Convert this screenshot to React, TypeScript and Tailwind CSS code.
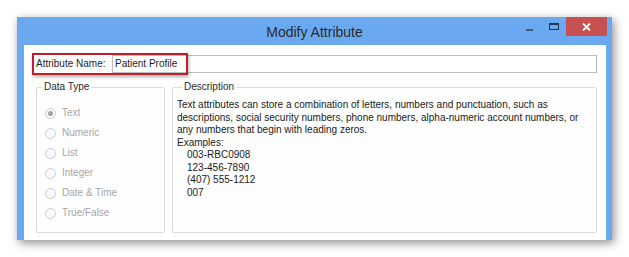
import React from "react";

const font = { fontFamily: '"Liberation Sans", Arial, sans-serif' };

function Radio({ label, checked }: { label: string; checked?: boolean }) {
  return (
    <div className="flex h-[20px] items-center pl-[8px]">
      <span className="flex h-[11px] w-[11px] items-center justify-center rounded-full border border-[#cdcdcd] bg-[#fafafa]">
        {checked && <span className="h-[5px] w-[5px] rounded-full bg-[#a3a3a3]" />}
      </span>
      <span className="ml-[6px] text-[10px] leading-[12px] text-[#a6a6a6]">{label}</span>
    </div>
  );
}

export default function App() {
  return (
    <div className="h-[257px] w-[629px] overflow-hidden bg-white pl-[17px] pt-[17px]" style={font}>
      <div className="flex h-[223px] w-[595px] flex-col shadow-[2px_3px_9px_rgba(0,0,0,0.45)]">
        {/* title bar */}
        <div className="grid h-[28px] grid-cols-[1fr_auto_1fr] bg-[#6aa9ef]">
          <div />
          <div className="flex items-center pt-[1px] text-[14px] leading-[16px] text-[#2a2a2a]">Modify Attribute</div>
          <div className="flex items-start justify-end pr-[5px]">
            <div className="mt-[12px] h-[2px] w-[7px] bg-[#41597a]" />
            <div className="ml-[16px] mt-[6px] h-[7px] w-[10px] border border-t-2 border-[#1f3653]" />
            <div className="ml-[7px] flex h-[19px] w-[41px] items-center justify-center bg-[#c75050]">
              <svg width="9" height="8" viewBox="0 0 9 8">
                <path d="M1 0.5 L8 7.5 M8 0.5 L1 7.5" stroke="white" strokeWidth="1.8" />
              </svg>
            </div>
          </div>
        </div>
        {/* body */}
        <div className="flex flex-1 flex-col border-l-[7px] border-r-[6px] border-[#6aa9ef] bg-[#fefefe]">
          <div className="relative ml-[8px] mr-[9px] mt-[8px] flex h-[22px] items-center">
            <span className="w-[80px] pl-[4px] text-[10px] leading-[12px] text-[#1e1e1e]">Attribute Name:</span>
            <div className="flex h-[18px] flex-1 items-center border border-[#bdbdbd] bg-white pl-[2px] text-[10px] leading-[12px] text-[#1e1e1e]">
              Patient Profile
            </div>
            <div className="pointer-events-none absolute left-0 top-0 h-[22px] w-[156px] border-2 border-[#bd1f2b] shadow-[1px_2px_3px_rgba(0,0,0,0.3)]" />
          </div>
          <div className="mt-[6px] flex flex-1 gap-[7px] pb-[7px] pl-[12px] pr-[9px]">
            <fieldset className="w-[129px] rounded-[2px] border border-[#dcdcdc] pb-[9px] pt-[10px]">
              <legend className="ml-[5px] px-[2px] text-[10px] leading-[12px] text-[#2a2a2a]">Data Type</legend>
              <Radio label="Text" checked />
              <Radio label="Numeric" />
              <Radio label="List" />
              <Radio label="Integer" />
              <Radio label="Date & Time" />
              <Radio label="True/False" />
            </fieldset>
            <fieldset className="flex-1 rounded-[2px] border border-[#dcdcdc] pl-[4px] pt-[6px]">
              <legend className="ml-[5px] px-[2px] text-[10px] leading-[12px] text-[#2a2a2a]">Description</legend>
              <div className="whitespace-nowrap text-[10px] leading-[12.5px] text-[#1a1a1a]">
                <div>Text attributes can store a combination of letters, numbers and punctuation, such as</div>
                <div>descriptions, social security numbers, phone numbers, alpha-numeric account numbers, or</div>
                <div>any numbers that begin with leading zeros.</div>
                <div>Examples:</div>
                <div className="pl-[10px]">003-RBC0908</div>
                <div className="pl-[10px]">123-456-7890</div>
                <div className="pl-[10px]">(407) 555-1212</div>
                <div className="pl-[10px]">007</div>
              </div>
            </fieldset>
          </div>
        </div>
      </div>
    </div>
  );
}
